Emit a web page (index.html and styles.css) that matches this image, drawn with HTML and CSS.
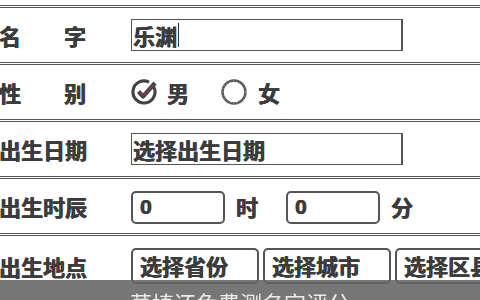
FILE: index.html
```
<!DOCTYPE html>
<html lang="zh">
<head>
<meta charset="utf-8">
<link rel="stylesheet" href="styles.css">
</head>
<body>
<div class="form">
  <div class="row">
    <span class="label">名字</span>
    <div class="input">乐渊<span class="caret"></span></div>
  </div>
  <div class="row">
    <span class="label">性别</span>
    <svg class="radio" width="28" height="28" viewBox="0 0 28 28">
      <path d="M22.5 8.5 A11 11 0 1 1 18 4.2" fill="none" stroke="#444" stroke-width="3.2"/>
      <path d="M7.5 13.5 L12 18.5 L24 5" fill="none" stroke="#444" stroke-width="4.2" stroke-linejoin="round"/>
      <path d="M8.5 14 L12 17.5 L22 7" fill="none" stroke="#8a3d48" stroke-width="1.4"/>
    </svg>
    <span class="opt">男</span>
    <svg class="radio off" width="28" height="28" viewBox="0 0 28 28">
      <circle cx="14" cy="14" r="11.5" fill="none" stroke="#555" stroke-width="2.4"/>
      <circle cx="14" cy="14" r="11.5" fill="none" stroke="#999" stroke-width="0.8" stroke-dasharray="1.5 2"/>
    </svg>
    <span class="opt">女</span>
  </div>
  <div class="row">
    <span class="label">出生日期</span>
    <div class="input date">选择出生日期</div>
  </div>
  <div class="row">
    <span class="label">出生时辰</span>
    <div class="box">0</div>
    <span class="unit">时</span>
    <div class="box second">0</div>
    <span class="unit">分</span>
  </div>
  <div class="row last">
    <span class="label">出生地点</span>
    <div class="sel">选择省份</div>
    <div class="sel">选择城市</div>
    <div class="sel">选择区县</div>
  </div>
</div>
<div class="bar">莫填还免费测名字评分</div>
</body>
</html>
```
FILE: styles.css
```
html, body {
  margin: 0;
  padding: 0;
  background: #fff;
  overflow: hidden;
}
body {
  width: 480px;
  height: 300px;
  font-family: "Noto Sans CJK SC", "Noto Sans", sans-serif;
  font-weight: 700;
  color: #3c3c3c;
}
.form {
  padding-top: 5px;
}
.row {
  display: flex;
  align-items: center;
  height: 54px;
  border-top: 3px double #555;
  white-space: nowrap;
  overflow: hidden;
  text-shadow: 0.5px 0 0 #3c3c3c, -0.3px 0 0 #3c3c3c;
}
.label {
  flex: none;
  width: 87px;
  margin-left: -1px;
  margin-right: 45px;
  font-size: 22px;
  line-height: 26px;
  text-align: justify;
  text-align-last: justify;
}
.input {
  flex: none;
  box-sizing: border-box;
  width: 272px;
  height: 32px;
  border: 1px solid #555;
  border-right-width: 2px;
  padding-left: 1px;
  font-size: 22px;
  line-height: 28px;
  display: flex;
  align-items: center;
}
.caret {
  display: inline-block;
  width: 1px;
  height: 24px;
  background: #333;
  margin-left: 1px;
}
.radio {
  flex: none;
  display: block;
}
.opt {
  font-size: 22px;
  line-height: 26px;
  margin-left: 8px;
}
.radio.off {
  margin-left: 31px;
}
.opt:last-child {
  margin-left: 10px;
}
.box {
  flex: none;
  box-sizing: border-box;
  width: 94px;
  height: 33px;
  border: 2px solid #555;
  border-radius: 5px;
  padding-left: 7px;
  font-family: "Liberation Sans", Arial, sans-serif;
  font-size: 21px;
  line-height: 28px;
  margin-top: 3px;
}
.unit {
  font-size: 22px;
  line-height: 26px;
  margin-left: 11px;
}
.box.second {
  margin-left: 28px;
}
.row.last {
  align-items: flex-start;
  padding-top: 12px;
  height: 60px;
  box-sizing: border-box;
}
.row.last .label {
  margin-top: 5px;
}
.sel {
  flex: none;
  box-sizing: border-box;
  width: 128px;
  height: 36px;
  border: 2px solid #555;
  border-radius: 5px;
  padding-left: 7px;
  margin-right: 4px;
  font-size: 22px;
  line-height: 30px;
}
.bar {
  position: fixed;
  left: 0;
  top: 280px;
  width: 480px;
  height: 50px;
  box-sizing: border-box;
  padding-top: 9px;
  background: rgba(100, 100, 100, 0.88);
  color: #ececec;
  font-weight: 400;
  font-size: 22px;
  line-height: 26px;
  text-align: center;
}
```
